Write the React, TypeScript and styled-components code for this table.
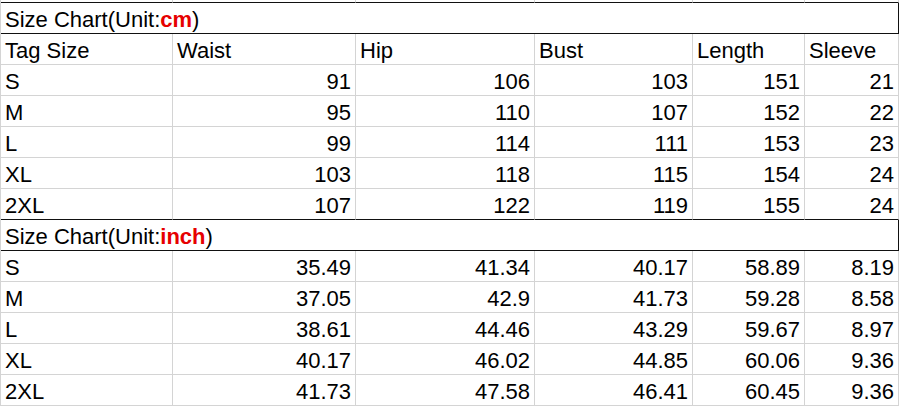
import React from "react";
import styled, { createGlobalStyle } from "styled-components";

const GlobalStyle = createGlobalStyle`
  html, body {
    margin: 0;
    padding: 0;
    background: #ffffff;
    overflow: hidden;
  }
  body {
    font-family: "Liberation Sans", Arial, sans-serif;
  }
`;

const GRID = "#d4d4d4";
const STRONG = "#111111";

const Sheet = styled.div`
  display: grid;
  grid-template-columns: 172px 183px 179px 158px 112px 94px;
  width: 899px;
  box-sizing: border-box;
  border-left: 1px solid ${GRID};
  font-family: "Liberation Sans", Arial, sans-serif;
  font-size: 22px;
  color: #000000;
`;

const StripCell = styled.div`
  height: 3px;
  box-sizing: border-box;
  border-right: 1px solid ${GRID};
  border-bottom: 1px solid ${STRONG};
`;

const Cell = styled.div<{ $num?: boolean; $strong?: boolean }>`
  height: 31px;
  box-sizing: border-box;
  padding: 2px ${(p) => (p.$num ? "4px" : "0")} 0 ${(p) => (p.$num ? "0" : "4px")};
  line-height: 30px;
  white-space: nowrap;
  text-align: ${(p) => (p.$num ? "right" : "left")};
  border-right: 1px solid ${GRID};
  border-bottom: 1px solid ${(p) => (p.$strong ? STRONG : GRID)};
`;

const TitleCell = styled.div`
  grid-column: 1 / -1;
  height: 31px;
  box-sizing: border-box;
  padding: 2px 0 0 4px;
  line-height: 30px;
  white-space: nowrap;
  border-right: 1px solid ${STRONG};
  border-bottom: 1px solid ${STRONG};
`;

const Unit = styled.span`
  color: #e60000;
  font-weight: bold;
`;

const headers = ["Tag Size", "Waist", "Hip", "Bust", "Length", "Sleeve"];

const cmRows: (string | number)[][] = [
  ["S", 91, 106, 103, 151, 21],
  ["M", 95, 110, 107, 152, 22],
  ["L", 99, 114, 111, 153, 23],
  ["XL", 103, 118, 115, 154, 24],
  ["2XL", 107, 122, 119, 155, 24],
];

const inchRows: (string | number)[][] = [
  ["S", "35.49", "41.34", "40.17", "58.89", "8.19"],
  ["M", "37.05", "42.9", "41.73", "59.28", "8.58"],
  ["L", "38.61", "44.46", "43.29", "59.67", "8.97"],
  ["XL", "40.17", "46.02", "44.85", "60.06", "9.36"],
  ["2XL", "41.73", "47.58", "46.41", "60.45", "9.36"],
];

function DataRows({ rows, strongLast }: { rows: (string | number)[][]; strongLast?: boolean }) {
  return (
    <>
      {rows.map((row, ri) =>
        row.map((v, ci) => (
          <Cell
            key={`${ri}-${ci}`}
            $num={ci > 0}
            $strong={strongLast && ri === rows.length - 1}
          >
            {v}
          </Cell>
        ))
      )}
    </>
  );
}

export default function App() {
  return (
    <>
      <GlobalStyle />
      <Sheet>
        {headers.map((h) => (
          <StripCell key={`strip-${h}`} />
        ))}
        <TitleCell>
          Size Chart(Unit:<Unit>cm</Unit>)
        </TitleCell>
        {headers.map((h) => (
          <Cell key={h}>{h}</Cell>
        ))}
        <DataRows rows={cmRows} strongLast />
        <TitleCell>
          Size Chart(Unit:<Unit>inch</Unit>)
        </TitleCell>
        <DataRows rows={inchRows} />
      </Sheet>
    </>
  );
}
